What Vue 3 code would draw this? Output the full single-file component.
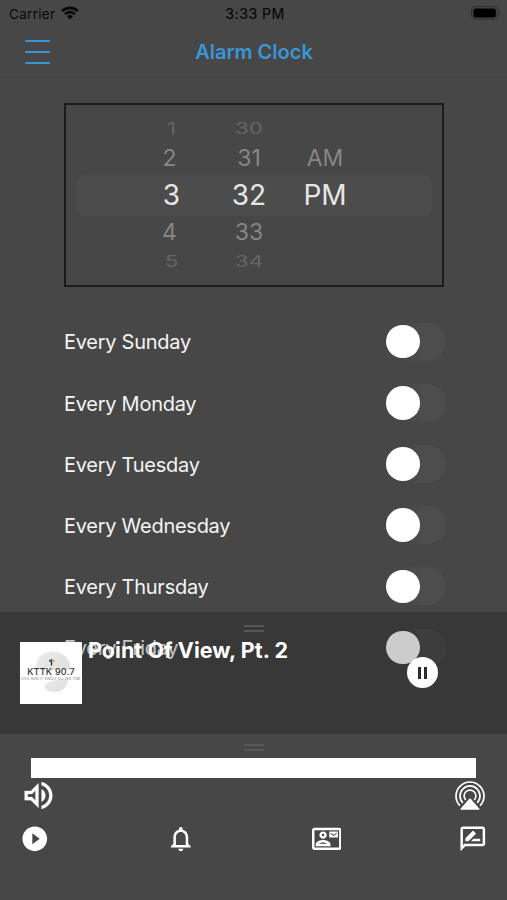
<template>
    <div class="phone">
        <div class="status-bar">
            <div class="carrier">
                <span>Carrier</span>
                <svg class="wifi" viewBox="0 0 18 14">
                    <path d="M1 5.2a11.3 11.3 0 0 1 16 0" />
                    <path d="M4 8.2a7 7 0 0 1 10 0" />
                    <path class="dot" d="M9 13.4L5.9 10.3a4.4 4.4 0 0 1 6.2 0z" />
                </svg>
            </div>
            <div class="clock">3:33 PM</div>
            <div class="battery-slot">
                <svg class="battery" viewBox="0 0 30 14">
                    <rect x="0.6" y="0.6" width="26" height="12.6" rx="4" class="shell" />
                    <rect x="2.4" y="2.4" width="22.4" height="9" rx="2" />
                    <path d="M28 4.6c1.3.5 1.3 4.1 0 4.6z" class="cap" />
                </svg>
            </div>
        </div>

        <header class="nav">
            <div class="menu">
                <i></i>
                <i></i>
                <i></i>
            </div>
            <h1>Alarm Clock</h1>
        </header>

        <div class="picker">
            <div v-for="row in times" :key="row.hour" class="time" :class="row.pos">
                <span class="hour">{{ row.hour }}</span>
                <span class="minute">{{ row.minute }}</span>
                <span class="half">{{ row.half }}</span>
            </div>
        </div>

        <div class="days">
            <div v-for="day in days" :key="day" class="day">
                <span>Every {{ day }}</span>
                <div class="toggle"><b></b></div>
            </div>
        </div>

        <div class="bottom">
            <div class="player">
                <div class="handle"></div>
                <div class="track">
                    <div class="art">
                        <svg class="globe" viewBox="0 0 62 62">
                            <defs>
                                <linearGradient id="shade" x1="0" y1="0" x2="1" y2="1">
                                    <stop offset="0" stop-color="#ececec" />
                                    <stop offset="1" stop-color="#dedede" />
                                </linearGradient>
                            </defs>
                            <path d="M17 20c2-8 12-12 20-10 9 2 14 9 13 18H19c-2-2-3-5-2-8z" fill="url(#shade)" />
                            <path d="M25 43c3-4 12-5 23-7 1 7-5 14-13 14-6 0-12-3-10-7z" fill="url(#shade)" />
                            <path d="M31.5 17v6.5" stroke="#333" stroke-width="1.4" />
                            <path d="M29 18.8h3" stroke="#3b5a70" stroke-width="2" />
                            <path d="M32.3 18h2.6l-2.4 4z" fill="#c7b43c" />
                        </svg>
                        <div class="call">KTTK 90.7</div>
                        <div class="motto">CIVIL MAN IT SINGLE ALL THE TIME</div>
                    </div>
                    <div class="song">Point Of View, Pt. 2</div>
                    <div class="pause"><i></i><i></i></div>
                </div>
            </div>

            <div class="tray">
                <div class="handle"></div>
                <div class="volume"></div>
                <div class="audio">
                    <svg class="speaker" viewBox="0 0 24 24">
                        <path :d="icons.speaker" />
                    </svg>
                    <svg class="airplay" viewBox="0 0 32 32">
                        <g fill="none" stroke="#fff" stroke-width="1.7">
                            <path d="M5.9 25.7A14 14 0 1 1 26.1 25.7" />
                            <path d="M8.8 22.9A10 10 0 1 1 23.2 22.9" />
                            <path d="M11.7 20A5.9 5.9 0 1 1 20.3 20" />
                        </g>
                        <path d="M15.3 18.8q.7-.8 1.4 0l8.7 9.9q.7 1.1-.5 1.1H7.1q-1.2 0-.5-1.1z" />
                    </svg>
                </div>
                <nav class="tabs">
                    <svg v-for="tab in tabs" :key="tab" viewBox="0 0 24 24">
                        <path :d="icons[tab]" />
                    </svg>
                </nav>
            </div>
        </div>
    </div>
</template>

<script setup>
const times = [
    { hour: '1', minute: '30', half: '', pos: 'far' },
    { hour: '2', minute: '31', half: 'AM', pos: 'near' },
    { hour: '3', minute: '32', half: 'PM', pos: 'picked' },
    { hour: '4', minute: '33', half: '', pos: 'near' },
    { hour: '5', minute: '34', half: '', pos: 'far' }
]

const days = ['Sunday', 'Monday', 'Tuesday', 'Wednesday', 'Thursday', 'Friday']

const tabs = ['play', 'bell', 'contact', 'review']

const icons = {
    speaker: 'M3 9v6h4l5 5V4L7 9H3zm7-.17v6.34L7.83 13H5v-2h2.83L10 8.83zM16.5 12c0-1.77-1.02-3.29-2.5-4.03v8.05c1.48-.73 2.5-2.25 2.5-4.02zM14 3.23v2.06c2.89.86 5 3.54 5 6.71s-2.11 5.85-5 6.71v2.06c4.01-.91 7-4.49 7-8.77 0-4.28-2.99-7.86-7-8.77z',
    play: 'M12 2C6.48 2 2 6.48 2 12s4.48 10 10 10 10-4.48 10-10S17.52 2 12 2zm-2 14.5v-9l6 4.5-6 4.5z',
    bell: 'M12 22c1.1 0 2-.9 2-2h-4c0 1.1.9 2 2 2zm6-6v-5c0-3.07-1.63-5.64-4.5-6.32V4c0-.83-.67-1.5-1.5-1.5s-1.5.67-1.5 1.5v.68C7.64 5.36 6 7.92 6 11v5l-2 2v1h16v-1l-2-2zm-2 1H8v-6c0-2.48 1.51-4.5 4-4.5s4 2.02 4 4.5v6z',
    contact: 'M22 3H2C.9 3 0 3.9 0 5v14c0 1.1.9 2 2 2h20c1.1 0 1.99-.9 1.99-2L24 5c0-1.1-.9-2-2-2zm0 16H2V5h20v14zM21 6h-7v5h7V6zm-1 2l-2.5 1.75L15 8V7l2.5 1.75L20 7v1zM9 12c1.65 0 3-1.35 3-3s-1.35-3-3-3-3 1.35-3 3 1.35 3 3 3zm0-4c.55 0 1 .45 1 1s-.45 1-1 1-1-.45-1-1 .45-1 1-1zm6 8.59c0-2.5-3.97-3.58-6-3.58s-6 1.08-6 3.58V18h12v-1.41zM5.48 16c.74-.5 2.22-1 3.52-1s2.77.49 3.52 1H5.48z',
    review: 'M20 2H4c-1.1 0-2 .9-2 2v18l4-4h14c1.1 0 2-.9 2-2V4c0-1.1-.9-2-2-2zm0 14H5.17l-.59.59-.58.58V4h16v12zm-9.5-2H18v-2h-5.5zm3.86-5.87c.2-.2.2-.51 0-.71l-1.77-1.77c-.2-.2-.51-.2-.71 0L6 11.53V14h2.47l5.89-5.87z'
}
</script>

<style scoped>
.phone {
    position: relative;
    width: 507px;
    height: 900px;
    overflow: hidden;
    background: #474747;
    color: #f4f4f4;
    font-family: Inter, "Liberation Sans", sans-serif;
}

.status-bar {
    display: grid;
    grid-template-columns: 1fr auto 1fr;
    align-items: center;
    height: 27px;
    padding: 0 6px 0 9px;
    color: #0a0a0a;
    font-size: 13.5px;

    & .carrier {
        display: flex;
        align-items: center;
        gap: 6px;
        letter-spacing: 0.3px;
    }

    & .clock {
        font-weight: 500;
        font-size: 14px;
        letter-spacing: 0.5px;
    }
}

.wifi {
    width: 18px;
    height: 14px;
    margin-top: -2px;
    fill: none;
    stroke: #0a0a0a;
    stroke-width: 2.6;

    & .dot {
        fill: #0a0a0a;
        stroke: none;
    }
}

.battery-slot {
    display: flex;
    justify-content: flex-end;
}

.battery {
    width: 30px;
    height: 14px;
    margin-top: -1px;
    fill: #000;

    & .shell {
        fill: none;
        stroke: #2e2e2e;
        stroke-width: 1;
    }

    & .cap {
        fill: #2e2e2e;
    }
}

.nav {
    display: grid;
    grid-template-columns: 1fr auto 1fr;
    align-items: center;
    height: 50px;
    padding: 0 24px 0 25px;
    border-bottom: 1px solid #444;

    & h1 {
        margin: 0;
        color: #3a96d6;
        font-size: 20px;
        font-weight: 600;
    }
}

.menu {
    display: flex;
    flex-direction: column;
    gap: 8.5px;
    width: 25px;

    & i {
        height: 2.4px;
        border-radius: 1px;
        background: #3a96d6;
    }
}

.picker {
    box-sizing: border-box;
    width: 380px;
    height: 184px;
    margin: 25px 0 0 64px;
    padding: 11.5px 10px 0;
    border: 2px solid #1b1b1b;
}

.time {
    display: grid;
    grid-template-columns: 76px 82px 70px;
    align-items: center;
    padding-left: 56px;
    text-align: center;

    & span {
        line-height: 30px;
    }

    & .hour {
        padding-left: 3px;
    }

    &.far {
        height: 24px;
        color: #656565;
        font-size: 22.5px;

        & span {
            line-height: 24px;
            transform: scaleY(0.68);
        }
    }

    &.near {
        height: 35px;
        color: #868686;
        font-size: 23px;

        & .hour {
            padding-left: 0;
            margin-left: -1px;
        }
    }

    &.picked {
        height: 41px;
        margin: -1px 0;
        border-radius: 8px;
        background: #4c4c4c;
        color: #e6e6e6;
        font-size: 28px;
    }
}

.days {
    padding: 24px 61px 0 64px;
}

.day {
    display: flex;
    align-items: center;
    justify-content: space-between;
    height: 61.2px;
    font-size: 20px;
    letter-spacing: -0.27px;

    & span {
        padding-top: 1.8px;
    }
}

.toggle {
    display: flex;
    align-items: center;
    box-sizing: border-box;
    width: 60px;
    height: 38px;
    border-radius: 19px;
    background: linear-gradient(90deg, #474747 30%, #4d4d4d 60%);

    & b {
        width: 33.5px;
        height: 33.5px;
        border-radius: 50%;
        background: #fff;
    }
}

/* translucent player sits over the list of days */
.bottom {
    position: absolute;
    left: 0;
    right: 0;
    bottom: 0;
}

.handle {
    width: 20px;
    height: 3px;
    margin: 0 auto;
    border: solid #575757;
    border-width: 2.5px 0;
}

.player {
    box-sizing: border-box;
    height: 122px;
    padding: 13px 20px 0;
    background: rgba(0, 0, 0, 0.2);
}

.track {
    display: flex;
    align-items: flex-start;
    margin-top: 10px;
}

.art {
    position: relative;
    width: 62px;
    height: 62px;
    overflow: hidden;
    background: #fefefe;
    color: #333;
    text-align: center;
    white-space: nowrap;

    & .globe {
        position: absolute;
        inset: 0;
    }

    & .call {
        position: relative;
        margin-top: 24px;
        font-size: 9px;
        line-height: 11px;
        font-weight: 500;
        letter-spacing: 0.25px;
    }

    & .motto {
        position: relative;
        color: #777;
        font-size: 3px;
        line-height: 4px;
        letter-spacing: 0.25px;
    }
}

.song {
    flex: 1;
    margin-left: 6px;
    color: #fff;
    font-size: 21.5px;
    font-weight: 700;
    line-height: 17px;
    letter-spacing: 0.05px;
}

.pause {
    display: flex;
    align-items: center;
    justify-content: center;
    gap: 3px;
    width: 31px;
    height: 31px;
    margin: 15px 49px 0 0;
    border-radius: 50%;
    background: #fff;

    & i {
        width: 3px;
        height: 12px;
        background: #2b2b2b;
    }
}

.tray {
    box-sizing: border-box;
    height: 166px;
    padding-top: 10px;
    background: #474747;
}

.volume {
    height: 19.5px;
    margin: 6px 31px 0;
    border-top: 1px solid #474747;
    background: #fff;
}

.audio {
    display: flex;
    align-items: center;
    justify-content: space-between;
    height: 36px;
    padding: 0 21px 0 20px;
}

.speaker {
    width: 37px;
    height: 37px;
    fill: #fff;
    stroke: #fff;
    stroke-width: 0.15;
}

.airplay {
    width: 32px;
    height: 32px;
    fill: #fff;
}

.tabs {
    display: flex;
    justify-content: space-between;
    margin-top: 10.5px;
    padding: 0 19.7px 0 20.3px;

    & svg {
        width: 29.6px;
        height: 29.6px;
        fill: #fff;
    }
}
</style>

<style>
body {
    margin: 0;
    background: #474747;
}
</style>
